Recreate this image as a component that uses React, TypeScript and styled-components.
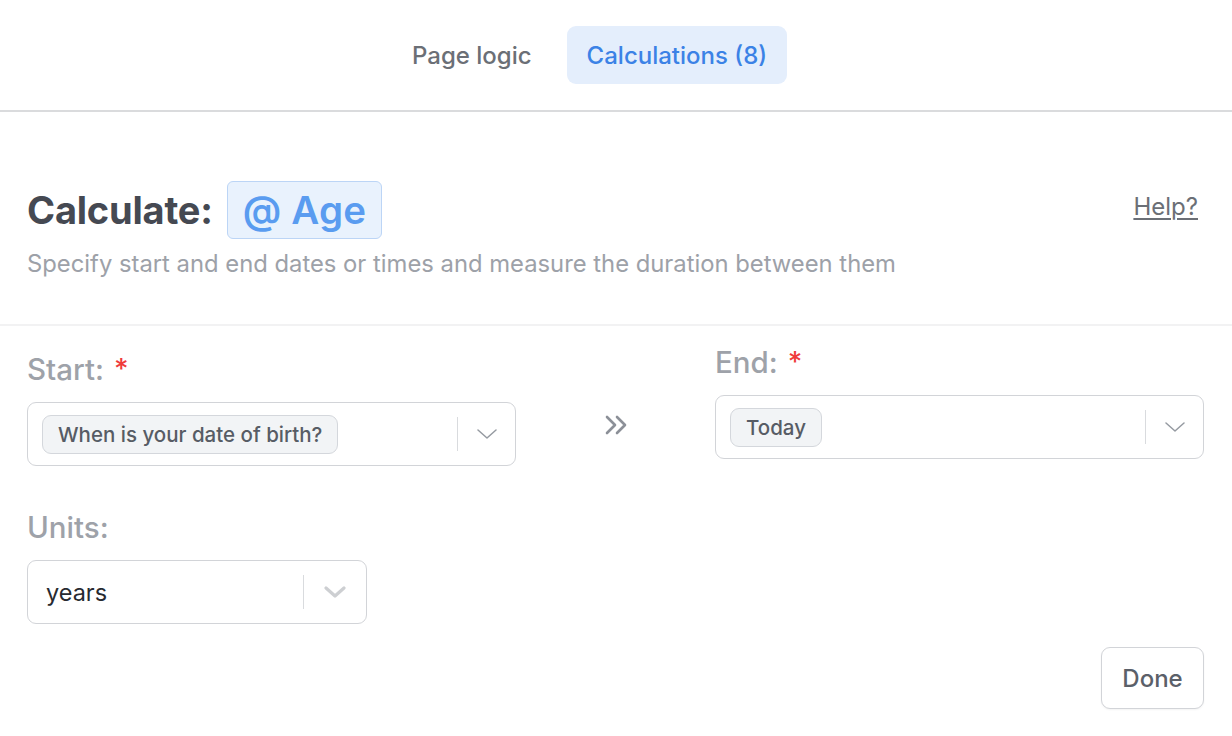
import React from "react";
import styled, { createGlobalStyle } from "styled-components";

const Global = createGlobalStyle`
  html, body { margin: 0; padding: 0; background: #ffffff; }
  body { font-family: Inter, "Noto Sans", "Liberation Sans", sans-serif; -webkit-font-smoothing: antialiased; }
  * { box-sizing: border-box; }
`;

const Page = styled.div`
  width: 1232px;
  height: 736px;
  overflow: hidden;
  background: #fff;
`;

const Header = styled.div`
  display: flex;
  align-items: flex-start;
  gap: 15px;
  height: 112px;
  padding: 26px 0 0 392px;
  border-bottom: 2px solid #dadbdd;
`;

const Tab = styled.button<{ $active?: boolean }>`
  height: 58px;
  padding: 0 20px;
  border: none;
  border-radius: 9px;
  font-family: inherit;
  font-size: 24px;
  font-weight: 500;
  background: ${(p) => (p.$active ? "#e4eefc" : "transparent")};
  color: ${(p) => (p.$active ? "#3b82e6" : "#6b6f76")};
  cursor: pointer;
`;

const Intro = styled.div`
  padding: 69px 34px 0 27px;
  height: 214px;
  border-bottom: 2px solid #f2f2f3;
`;

const TitleRow = styled.div`
  display: flex;
  align-items: center;
  gap: 14px;
`;

const Title = styled.h1`
  margin: 0;
  font-size: 38px;
  font-weight: 700;
  color: #454952;
  letter-spacing: -0.2px;
`;

const VarBadge = styled.span`
  display: inline-flex;
  align-items: center;
  height: 58px;
  padding: 0 15px;
  border-radius: 6px;
  background: #e9f2fd;
  border: 1.5px solid #bcd5f6;
  color: #5a9cf0;
  font-size: 38.5px;
  font-weight: 600;
  letter-spacing: 0.2px;
`;

const Help = styled.a`
  margin-left: auto;
  font-size: 24px;
  color: #6b6f76;
  text-decoration: underline;
  text-underline-offset: 3px;
  text-decoration-thickness: 1.5px;
  margin-top: -8px;
`;

const Subtitle = styled.p`
  margin: 11px 0 0;
  font-size: 23.8px;
  line-height: 27px;
  color: #9da1a8;
`;

const Body = styled.div`
  padding: 19px 28px 0 27px;
`;

const Grid = styled.div`
  display: grid;
  grid-template-columns: 489px 1fr 489px;
  align-items: end;
`;

const Field = styled.div<{ $lift?: number }>`
  display: flex;
  flex-direction: column;
  gap: 16px;
  margin-bottom: ${(p) => p.$lift ?? 0}px;
`;

const Label = styled.div`
  font-size: 29.5px;
  line-height: 34px;
  font-weight: 500;
  color: #9ea2a9;
  display: flex;
  gap: 10px;
  align-items: flex-start;
`;

const Star = styled.span`
  color: #ef3b3b;
  font-size: 28px;
`;

const Select = styled.div<{ $width?: string }>`
  display: flex;
  align-items: center;
  height: 64px;
  width: ${(p) => p.$width ?? "100%"};
  border: 1.5px solid #d2d4d8;
  border-radius: 9px;
  background: #fff;
  padding-left: 14px;
`;

const Value = styled.div`
  flex: 1;
  display: flex;
  align-items: center;
  min-width: 0;
`;

const Chip = styled.span`
  display: inline-flex;
  align-items: center;
  height: 39px;
  padding: 0 15px;
  border-radius: 9px;
  background: #f2f4f6;
  border: 1.5px solid #d4d7dc;
  color: #575c65;
  font-size: 20.5px;
  font-weight: 500;
`;

const PlainValue = styled.span`
  padding-left: 4px;
  font-size: 23.5px;
  color: #272a30;
`;

const Divider = styled.span`
  width: 1.5px;
  height: 34px;
  background: #d9dbde;
`;

const Indicator = styled.span<{ $w?: number }>`
  width: ${(p) => p.$w ?? 57}px;
  display: flex;
  align-items: center;
  justify-content: center;
`;

const ArrowCell = styled.div`
  display: flex;
  justify-content: center;
  align-items: center;
  height: 64px;
  padding: 0 0 18px 2px;
`;

const UnitsWrap = styled.div`
  margin-top: 44px;
`;

const Footer = styled.div`
  display: flex;
  justify-content: flex-end;
  margin-top: 23px;
`;

const DoneButton = styled.button`
  width: 103px;
  height: 62px;
  border-radius: 9px;
  border: 1.5px solid #d2d4d8;
  background: #fff;
  color: #5b6069;
  font-family: inherit;
  font-size: 24px;
  font-weight: 500;
  box-shadow: 0 1px 2px rgba(0, 0, 0, 0.05);
`;

const Chevron = ({ bold }: { bold?: boolean }) =>
  bold ? (
    <svg width="22" height="12" viewBox="0 0 22 12">
      <path d="M2 2 L11 10 L20 2" fill="none" stroke="#cdcfd2" strokeWidth="3.2" strokeLinecap="round" strokeLinejoin="round" />
    </svg>
  ) : (
    <svg width="20" height="10" viewBox="0 0 20 10">
      <path d="M1 1 L10 9 L19 1" fill="none" stroke="#959aa1" strokeWidth="1.5" strokeLinecap="round" strokeLinejoin="round" />
    </svg>
  );

const DoubleArrow = () => (
  <svg width="24" height="20" viewBox="0 0 24 20">
    <path d="M2 2 L10 10 L2 18 M12 2 L20 10 L12 18" fill="none" stroke="#8c9098" strokeWidth="2.6" strokeLinecap="round" strokeLinejoin="round" />
  </svg>
);

export default function App() {
  return (
    <Page>
      <Global />
      <Header>
        <Tab>Page logic</Tab>
        <Tab $active>Calculations (8)</Tab>
      </Header>
      <Intro>
        <TitleRow>
          <Title>Calculate:</Title>
          <VarBadge>@ Age</VarBadge>
          <Help href="#">Help?</Help>
        </TitleRow>
        <Subtitle>Specify start and end dates or times and measure the duration between them</Subtitle>
      </Intro>
      <Body>
        <Grid>
          <Field>
            <Label>
              Start: <Star>*</Star>
            </Label>
            <Select>
              <Value>
                <Chip>When is your date of birth?</Chip>
              </Value>
              <Divider />
              <Indicator>
                <Chevron />
              </Indicator>
            </Select>
          </Field>
          <ArrowCell>
            <DoubleArrow />
          </ArrowCell>
          <Field $lift={7}>
            <Label>
              End: <Star>*</Star>
            </Label>
            <Select>
              <Value>
                <Chip>Today</Chip>
              </Value>
              <Divider />
              <Indicator>
                <Chevron />
              </Indicator>
            </Select>
          </Field>
        </Grid>
        <UnitsWrap>
          <Field>
            <Label>Units:</Label>
            <Select $width="340px">
              <Value>
                <PlainValue>years</PlainValue>
              </Value>
              <Divider />
              <Indicator $w={62}>
                <Chevron bold />
              </Indicator>
            </Select>
          </Field>
        </UnitsWrap>
        <Footer>
          <DoneButton>Done</DoneButton>
        </Footer>
      </Body>
    </Page>
  );
}
